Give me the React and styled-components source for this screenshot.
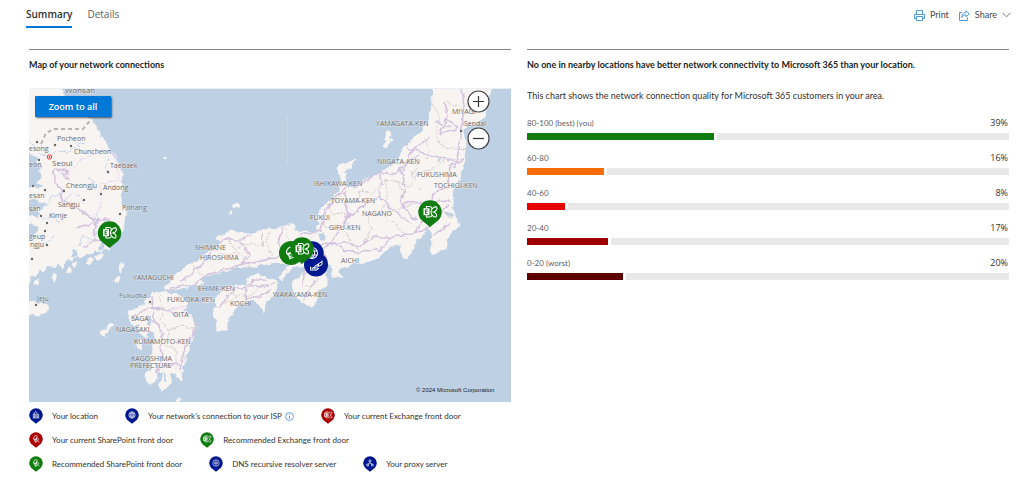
import React from "react";
import styled, { createGlobalStyle } from "styled-components";

const GlobalStyle = createGlobalStyle`
  * { box-sizing: border-box; }
  body {
    margin: 0;
    background: #fff;
    color: #323130;
    font-family: Lato, "Open Sans", sans-serif;
    font-size: 9px;
    line-height: 16px;
  }
  button { font-family: inherit; }
`;

const TopBar = styled.header`
  display: flex;
  justify-content: space-between;
  align-items: flex-start;
  padding: 0 13px 0 26px;
`;

const Tabs = styled.nav`
  display: flex;
  gap: 15px;
`;

const Tab = styled.button`
  border: 0;
  border-bottom: 2px solid ${(p) => (p.$active ? "#0078d4" : "transparent")};
  background: none;
  padding: 6px 0 4px;
  font-family: "Open Sans", sans-serif;
  font-size: 10px;
  line-height: 16px;
  font-weight: ${(p) => (p.$active ? 600 : 400)};
  color: ${(p) => (p.$active ? "#323130" : "#605e5c")};
`;

const Actions = styled.div`
  display: flex;
  gap: 10px;
  padding-top: 7px;
`;

const Action = styled.button`
  display: flex;
  align-items: center;
  gap: 5px;
  border: 0;
  background: none;
  padding: 0;
  font-size: 9px;
  line-height: 16px;
  color: #484644;
`;

const Columns = styled.main`
  display: grid;
  grid-template-columns: 1fr 1fr;
  gap: 16px;
  padding: 21px 15px 16px 29px;
`;

const Panel = styled.section`
  min-width: 0;
  border-top: 1px solid #7d8794;
  padding-top: 7px;
`;

const Heading = styled.h2`
  margin: 0 0 15px;
  font-size: 9px;
  line-height: 16px;
  font-weight: 700;
  color: #201f1e;
`;

const MapFrame = styled.div`
  position: relative;
  border-top: 1px solid #e9eff6;
  svg { display: block; }
`;

const ZoomAll = styled.button`
  position: absolute;
  top: 7px;
  left: 6px;
  width: 76px;
  height: 21px;
  border: 0;
  border-radius: 1px;
  padding: 0;
  background: #0078d7;
  color: #fff;
  font-family: "Open Sans", sans-serif;
  font-size: 9px;
  font-weight: 600;
  box-shadow: 1px 1px 2px rgba(0, 0, 0, 0.6);
`;

const ZoomButtons = styled.div`
  position: absolute;
  top: 1px;
  right: 21px;
  display: grid;
  gap: 14px;
`;

const RoundButton = styled.button`
  width: 23px;
  height: 23px;
  border: 0;
  padding: 0;
  background: none;
`;

const Legend = styled.ul`
  display: flex;
  flex-wrap: wrap;
  gap: 8px 27px;
  list-style: none;
  margin: 6px 0 0;
  padding: 0;
`;

const LegendItem = styled.li`
  display: flex;
  align-items: center;
  gap: 9px;
  font-size: 8px;
  line-height: 16px;
`;

const LegendText = styled.span`
  display: flex;
  align-items: center;
  gap: 3px;
`;

const Intro = styled.p`
  margin: 0 0 11px;
`;

const Bars = styled.dl`
  display: grid;
  gap: 10px;
  margin: 0;
`;

const BarRow = styled.div`
  display: grid;
  grid-template-columns: 1fr auto;
  row-gap: 2px;
`;

const BarLabel = styled.dt`
  font-size: 8px;
  color: #605e5c;
`;

const BarValue = styled.dd`
  margin: 0;
  padding-right: 1px;
  font-family: "Open Sans", sans-serif;
  font-size: 9px;
`;

const Meter = styled.dd`
  grid-column: 1 / -1;
  display: flex;
  gap: 3px;
  height: 7px;
  margin: 0;
`;

const Fill = styled.span`
  flex: ${(p) => p.$share} 0 0;
  background: ${(p) => p.$color};
`;

const bars = [
  { label: "80-100 (best) (you)", value: 39, color: "#107c10" },
  { label: "60-80", value: 16, color: "#f76c00" },
  { label: "40-60", value: 8, color: "#e60000" },
  { label: "20-40", value: 17, color: "#9e0000" },
  { label: "0-20 (worst)", value: 20, color: "#5e0000" },
];

const NAVY = "#00188f";
const GREEN = "#107c10";
const RED = "#a80000";

const glyphs = {
  exchange: (
    <>
      <path d="M1 -0.500 C1 -3 4 -5.500 6.500 -5 C8 -3 6 -0.500 3.500 0 C6 0.800 7.500 3 6 5 C3.500 5.500 1.500 3 1 0.500Z M-3.500 -3.500 V-5.500 H0 Q2 -5 2 -3 M-3.500 3 V5 H0 Q2 4.500 2 3" fill="none" strokeWidth="1.100" />
      <path d="M-6.500 -3.800 H-0.500 V3.200 H-6.500Z" fill="#fff" stroke="none" />
      <path d="M-2.300 -2.200 H-4.500 V1.700 H-2.300 M-4.500 -0.300 H-2.600" fill="none" stroke="var(--pin)" strokeWidth="0.900" />
    </>
  ),
  sharepoint: (
    <>
      <path d="M1.500 -5.500 A4.500 4.500 0 0 0 -3 2 M0 -1.500 A3 3 0 0 1 4.500 1.500 M3 3 L6 5 M1.500 -5.500 Q3.500 -4 1 -2.500" fill="none" strokeWidth="1.200" />
      <path d="M-3.500 0 L1.500 -1.500 3 4.500 -1.500 6.500Z" fill="#fff" stroke="none" />
      <path d="M0.800 0.800 L-1.200 1.500 -0.800 2.800 1.200 2.600 1.500 4 -0.500 4.500" fill="none" stroke="var(--pin)" strokeWidth="0.900" />
    </>
  ),
  globe: (
    <>
      <circle r="5.500" fill="none" strokeWidth="1.100" />
      <path d="M0 -5.500 V5.500 M-5 -2 H5 M-5 2 H5 M0 -5.500 C-3.500 -2 -3.500 2 0 5.500 C3.500 2 3.500 -2 0 -5.500" fill="none" strokeWidth="1" />
    </>
  ),
  building: (
    <path d="M-5.500 5 H5.500 M-4.500 5 V-2 L-2.500 -3.500 V5 M-2.500 -4 L0 -6 1.500 -4 V5 M1.500 -1 H4.500 V5 M-0.500 -2 V4 M3 1 V4" fill="none" strokeWidth="1.100" />
  ),
  office: (
    <path d="M-6 5.500 H1 L3 3.500 M-6 1 H0 L6 -3 M-6 3.200 H0 M-5.500 1 V5 M-3.300 1 V5 M-1.100 1 V5 M1.100 0.500 V5 M2.500 -0.500 V2 L6 0 V-4" fill="none" strokeWidth="1" />
  ),
  dns: (
    <>
      <circle r="5.500" fill="none" strokeWidth="1" />
      <path d="M-3.500 -1 H3.500 M-3.500 1 H3.500 M-2 -3.500 H2 M-2 3.500 H2" fill="none" strokeWidth="1" />
    </>
  ),
  proxy: (
    <path d="M-1.500 -5 H1.500 V-2 H-1.500Z M0 -2 V0 M0 0 L-4 2 M0 0 L4 2 M-5.500 2 H-2.500 V5 H-5.500Z M2.500 2 H5.500 V5 H2.500Z" fill="none" strokeWidth="1.100" />
  ),
};

function Pin({ color, glyph, x = 0, y = 0, round }) {
  return (
    <g transform={`translate(${x} ${y})`} style={{ "--pin": color }} stroke="#fff">
      {round ? (
        <circle r="12" fill={color} stroke="none" />
      ) : (
        <path d="M0 15 L-8.600 8 A11.700 11.700 0 1 1 8.600 8Z" fill={color} stroke="none" />
      )}
      {glyphs[glyph]}
    </g>
  );
}

const legend = [
  { text: "Your location", color: NAVY, glyph: "building" },
  { text: "Your network's connection to your ISP", color: NAVY, glyph: "globe", info: true },
  { text: "Your current Exchange front door", color: RED, glyph: "exchange" },
  { text: "Your current SharePoint front door", color: RED, glyph: "sharepoint" },
  { text: "Recommended Exchange front door", color: GREEN, glyph: "exchange" },
  { text: "Recommended SharePoint front door", color: GREEN, glyph: "sharepoint" },
  { text: "DNS recursive resolver server", color: NAVY, glyph: "dns" },
  { text: "Your proxy server", color: NAVY, glyph: "proxy" },
];

const MapSvg = styled.svg`
  width: 100%;
  height: auto;
  background: #bdd0e4;
`;

const PlaceName = styled.text`
  font-family: "Open Sans", "Noto Sans", sans-serif;
  font-size: ${(p) => (p.$large ? 8 : 7)}px;
  fill: #6c6a6a;
  stroke: #f8f6f4;
  stroke-width: 1px;
  stroke-opacity: 0.6;
  paint-order: stroke;
`;

const Copyright = styled.text`
  font-family: "Liberation Sans", sans-serif;
  font-size: 6px;
  fill: #222;
`;

const land = [
  "M20 80 H61 L63 95 70 103 80 112 89 116 94 123 100 135 108 146 115 160 121 171 122 185 121 198 123 208 127 213 125 221 122 231 118 240 113 244 110 249 104 248 101 252 96 250 92 255 87 253 82 258 76 255 72 261 67 258 63 267 58 263 54 269 48 265 44 272 40 270 35 277 32 275 29 282 20 282Z",
  "M433 80 L432 105 429 120 422 131 413 138 405 148 400 156 392 166 383 171 375 176 368 178 362 181 358 187 352 190 346 188 344 183 347 176 343 173 353 166 356 159 348 162 339 165 338 171 340 178 341 188 335 195 328 203 322 209 318 217 320 223 317 230 312 233 305 231 299 233 295 231 295 225 288 225 280 228 270 229 260 232 247 233 238 234 232 231 223 234 218 238 220 242 215 247 205 255 197 262 187 265 180 272 170 280 165 287 171 290 180 288 187 289 193 285 203 284 200 278 210 275 220 272 228 271 233 267 247 268 260 265 277 262 285 264 293 268 302 265 306 270 300 278 293 280 292 288 295 295 302 302 312 306 317 300 318 292 327 285 327 277 323 268 328 263 333 268 331 277 345 277 337 272 343 268 353 263 365 263 380 257 388 250 396 244 401 246 401 256 408 259 413 252 413 244 422 238 427 228 432 231 433 243 430 251 433 255 445 248 448 237 460 225 455 218 452 208 452 195 460 178 465 161 465 145 463 131 468 124 476 126 484 118 488 108 492 80Z",
  "M248 278 L258 274 266 278 275 280 277 287 272 297 267 302 263 312 258 303 248 300 240 305 232 313 227 323 227 330 218 330 217 320 212 315 218 305 212 300 205 302 219 295 223 290 233 285 247 286Z",
  "M153 292 L160 293 166 290 170 295 180 296 188 300 186 308 180 311 191 314 195 327 191 343 185 357 183 373 180 380 176 374 171 373 170 383 166 387 161 392 160 383 164 374 157 370 156 383 148 383 146 375 153 368 150 358 153 347 156 340 153 332 149 330 145 337 140 333 136 330 140 321 134 325 129 318 128 311 138 308 145 304 149 297Z",
  "M20 304 L41 303 48 307 46 312 38 315 20 314Z",
  "M389 129 L392 133 389 138 392 141 386 148 383 146 387 141 384 140Z",
  "M289 266 L291 268 284 277 281 281 280 277Z",
  "M120 263 L123 265 121 272 119 272Z M117 275 L119 277 117 283 114 282Z",
  "M112 322 L113 325 106 333 104 337 100 333 106 330Z",
  "M138 340 L143 343 141 350 136 347Z",
  "M234 203 L237 202.500 239 205 237 208 234 207Z M229 211 H231 V213 H229Z M163 158 H166 V160 H163Z",
  "M51 277 L54 273 56 278 54 283Z M66 270 L70 267 72 272 68 273Z M85 262 L91 258 93 261 88 264Z M95 256 L101 254 101 259 97 260Z M36 280 L39 279 38 285 35 284Z M73 263 L77 262 76 267Z",
  "M177 399 H180 V402 H177Z",
];

const inlets = [
  "M20 150 L34 156 39 158 36 163 43 167 38 172 42 178 36 182 43 186 38 190 34 187 20 191Z",
  "M20 200 L36 199 40 204 46 203 43 208 37 209 42 215 38 219 33 215 20 218Z",
  "M20 228 L33 224 38 226 36 232 32 236 20 237Z",
  "M98 250 L102 241 104 243 102 251Z M71 257 L73 249 76 250 75 257Z",
  "M318 233 L323 232 325 238 322 243Z",
  "M445 211 L450 213 453 217 447 215Z M437 158 L440 159 439 163 437 162Z",
  "M148 315 L152 318 150 326 146 324Z M164 372 L167 376 164 382Z",
];

const rivers =
  "M29 141 L42 155 50 158 58 150 68 152 78 146 82 153 M72 139 L78 145 85 143 M45 206 L52 196 60 193 M64 201 L72 192 84 202 M88 176 L96 190 101 196 M110 158 L104 168 110 174 M31 249 L44 244 56 236 M78 246 L84 236 92 240 M42 220 L52 215 58 222 M98 214 L94 226 97 235 M412 171 L414 178 M420 188 L421 190";

const roads =
  "M53 169 L67 171 68 174 62 173 69 181 M53 169 L54 180 62 192 62 201 76 208 92 218 95 226 94 240 M76 228 L88 225 96 220 110 220 M84 246 L94 240 104 241 M60 194 L63 204 M95 226 L100 218 M152 295 L153 307 165 310 178 314 M153 307 L140 312 132 320 M153 307 L154 320 163 333 161 345 162 355 156 372 M195 320 L194 333 184 350 181 370 M162 365 L182 364 M168 291 L178 286 192 286 205 276 222 270 M180 281 L190 275 205 262 214 248 226 238 236 240 252 235 M222 270 L242 264 262 261 280 256 300 252 M238 240 L250 255 242 264 M262 233 L263 246 M282 228 L278 243 285 252 M247 287 L246 300 M219 307 L234 289 248 287 275 284 M248 286 L252 280 266 280 M246 298 L262 296 270 290 M300 235 L320 230 325 212 334 199 345 188 360 184 380 172 395 175 403 166 418 155 M335 198 L347 193 M346 190 L345 205 350 215 341 228 331 243 322 250 M331 243 L347 243 358 248 373 236 390 238 414 232 428 214 M300 252 L314 246 331 243 350 252 380 250 390 240 M305 265 L303 285 M322 250 L326 260 316 276 M314 280 L303 299 M380 172 L383 185 378 196 363 207 345 218 M378 196 L393 210 412 224 M400 167 L405 190 400 202 415 220 M404 170 L412 150 430 138 M407 148 L430 155 460 162 M454 170 L460 145 462 128 464 106 462 89 M443 100 L448 120 458 128 440 134 446 118 M435 122 L450 127 M403 203 L450 201 M428 214 L432 195 448 185 450 165 464 160 M414 232 L424 231 435 220 448 205 M433 235 L452 223";

const softRoads =
  "M67 171 L82 160 102 150 115 154 119 180 99 184 104 198 97 212 92 220 M48 156 L67 171 M166 310 L188 306";

const borders =
  "M158 293 L164 310 160 320 168 330 180 326 194 328 M168 330 L166 345 176 350 176 370 M215 250 L225 255 238 252 248 260 250 270 M192 262 L198 272 205 275 M228 240 L235 250 246 244 256 246 266 242 270 233 M266 242 L272 255 M285 228 L290 245 300 248 M318 230 L312 238 305 242 308 256 M327 204 L332 215 345 212 348 224 332 229 322 224 M340 180 L334 194 M345 206 L358 198 360 190 M360 190 L372 195 385 180 398 183 M385 180 L388 196 382 212 395 225 M345 230 L352 244 M366 215 L372 228 365 240 358 250 M395 225 L410 240 M395 210 L420 202 438 206 452 218 M398 183 L410 186 418 175 440 165 445 158 M418 155 L414 175 M432 105 L440 118 436 135 445 148 465 150 M424 138 L430 150 426 160 M445 100 L462 108 M400 204 L403 190 394 180 M232 290 L240 300 M222 305 L236 297 250 295 262 285 M310 270 L320 275 314 285 300 287";

const labels = [
  ["Wonsan", 65, 93, true],
  ["Pocheon", 57, 141],
  ["esong", 29, 151],
  ["Chuncheon", 74, 154],
  ["Seoul", 52, 166, true],
  ["Taebaek", 110, 168],
  ["eon", 29, 167],
  ["Cheongju", 66, 188],
  ["Andong", 103, 190],
  ["esan", 29, 198],
  ["Sangju", 58, 207],
  ["san", 29, 211],
  ["Pohang", 122, 210],
  ["Kimje", 49, 218],
  ["geup", 29, 239],
  ["ngju", 30, 247],
  ["Jeju", 37, 301],
  ["Fukuoka", 119, 298],
  ["YAMAGUCHI", 133, 280],
  ["FUKUOKA-KEN", 167, 302],
  ["SAGA", 131, 321],
  ["OITA", 173, 317],
  ["NAGASAKI", 116, 332],
  ["KUMAMOTO-KEN", 134, 344],
  ["KAGOSHIMA", 131, 361],
  ["PREFECTURE", 130, 368],
  ["SHIMANE", 195, 250],
  ["HIROSHIMA", 200, 260],
  ["EHIME-KEN", 198, 291],
  ["KOCHI", 230, 306],
  ["WAKAYAMA-KEN", 273, 297],
  ["AICHI", 341, 263],
  ["GIFU-KEN", 329, 230],
  ["FUKUI", 310, 220],
  ["NAGANO", 362, 216],
  ["TOYAMA-KEN", 331, 203],
  ["ISHIKAWA-KEN", 314, 186],
  ["TOCHIGI-KEN", 434, 188],
  ["FUKUSHIMA", 417, 177],
  ["NIIGATA-KEN", 377, 164],
  ["YAMAGATA-KEN", 376, 126],
  ["Sendai", 464, 126],
  ["MIYAGI", 452, 114],
];

const towns = [
  [37, 142], [55, 145], [71, 146], [39, 160], [108, 172], [64, 191], [45, 190], [101, 194], [33, 186],
  [84, 200], [120, 214], [41, 216], [47, 223], [45, 231], [47, 245], [32, 259], [36, 305], [150, 302], [461, 131],
];

function ConnectionMap() {
  return (
    <MapSvg viewBox="29 89 482 313" role="img" aria-label="Map of your network connections">
      <filter id="coast" x="0" y="0" width="1" height="1">
        <feTurbulence type="fractalNoise" baseFrequency="0.14" numOctaves="3" seed="4" />
        <feDisplacementMap in="SourceGraphic" scale="6" xChannelSelector="R" yChannelSelector="G" />
      </filter>
      <g filter="url(#coast)">
        {land.map((d) => (
          <path key={d} d={d} fill="#f7f4f2" stroke="#f7f4f2" strokeWidth="1" strokeLinejoin="round" />
        ))}
        {inlets.map((d) => (
          <path key={d} d={d} fill="#bdd0e4" />
        ))}
        <path d={rivers} fill="none" stroke="#c5d6e8" strokeWidth="1" />
        <path d={borders} fill="none" stroke="#d3cccb" strokeWidth="1" strokeDasharray="2 1" />
        <path d={softRoads} fill="none" stroke="#eed9f2" strokeWidth="1" />
        <path d={roads} fill="none" stroke="#d4c2de" strokeWidth="1.500" strokeLinejoin="round" />
      </g>
      <path d="M41 144 L46 133 54 129 83 129 89 122 90 116" fill="none" stroke="#b9b5b4" strokeWidth="2" strokeDasharray="4 3" />
      <path d="M287 115 V165" stroke="#cbd8e6" strokeWidth="1" />
      {towns.map(([x, y]) => (
        <circle key={`${x}-${y}`} cx={x} cy={y} r="1.200" fill="#666" />
      ))}
      <circle cx="49.500" cy="157" r="2.200" fill="#fff" stroke="#e0403a" strokeWidth="1" />
      <circle cx="49.500" cy="157" r="1" fill="#e0403a" />
      {labels.map(([name, x, y, large]) => (
        <PlaceName key={name} x={x} y={y} $large={large}>
          {name}
        </PlaceName>
      ))}
      <Pin x={109.5} y={233} color={GREEN} glyph="exchange" />
      <Pin x={430} y={212} color={GREEN} glyph="exchange" />
      <Pin x={316} y={264.5} color={NAVY} glyph="office" round />
      <Pin x={312} y={253} color={NAVY} glyph="globe" />
      <Pin x={291} y={253} color={GREEN} glyph="sharepoint" round />
      <Pin x={302} y={249} color={GREEN} glyph="exchange" />
      <Copyright x="416" y="392">© 2024 Microsoft Corporation</Copyright>
    </MapSvg>
  );
}

function RoundIcon({ plus }) {
  return (
    <svg width="23" height="23" viewBox="0 0 23 23">
      <circle cx="11.500" cy="11.500" r="10.500" fill="#fff" stroke="#444" strokeWidth="1.200" />
      <path d={plus ? "M6 11.500 H17 M11.500 6 V17" : "M6 11.500 H17"} stroke="#333" strokeWidth="1.200" />
    </svg>
  );
}

export default function App() {
  return (
    <>
      <GlobalStyle />
      <TopBar>
        <Tabs>
          <Tab $active>Summary</Tab>
          <Tab>Details</Tab>
        </Tabs>
        <Actions>
          <Action>
            <svg width="11" height="11" viewBox="0 0 11 11" fill="none" stroke="#4a9be0">
              <path d="M2.500 4.500 V0.500 H8.500 V4.500 M2.500 8.500 H0.500 V4.500 H10.500 V8.500 H8.500 M2.500 6.500 H8.500 V10.500 H2.500Z" />
            </svg>
            Print
          </Action>
          <Action>
            <svg width="11" height="11" viewBox="0 0 11 11" fill="none" stroke="#4a9be0">
              <path d="M3 2.500 H0.500 V10.500 H8.500 V7.500 M7 0.800 L10.300 3.800 7 6.800 V5 C5 5 4 5.500 2.700 7.500 C3 4.500 4.500 2.700 7 2.500Z" strokeLinejoin="round" />
            </svg>
            Share
            <svg width="9" height="6" viewBox="0 0 9 6" fill="none" stroke="#777">
              <path d="M0.500 0.800 L4.500 4.800 L8.500 0.800" />
            </svg>
          </Action>
        </Actions>
      </TopBar>
      <Columns>
        <Panel>
          <Heading>Map of your network connections</Heading>
          <MapFrame>
            <ConnectionMap />
            <ZoomAll>Zoom to all</ZoomAll>
            <ZoomButtons>
              <RoundButton aria-label="Zoom in"><RoundIcon plus /></RoundButton>
              <RoundButton aria-label="Zoom out"><RoundIcon /></RoundButton>
            </ZoomButtons>
          </MapFrame>
          <Legend>
            {legend.map((item) => (
              <LegendItem key={item.text}>
                <svg width="14" height="16" viewBox="-12 -12 24 27.500" aria-hidden="true">
                  <Pin color={item.color} glyph={item.glyph} />
                </svg>
                <LegendText>
                  {item.text}
                  {item.info && (
                    <svg width="9" height="9" viewBox="0 0 9 9" fill="none" stroke="#4a90d0">
                      <circle cx="4.500" cy="4.500" r="4" strokeWidth="0.800" />
                      <path d="M4.500 4 V7 M4.500 2 V3" strokeWidth="0.900" />
                    </svg>
                  )}
                </LegendText>
              </LegendItem>
            ))}
          </Legend>
        </Panel>
        <Panel>
          <Heading>
            No one in nearby locations have better network connectivity to Microsoft 365 than your location.
          </Heading>
          <Intro>This chart shows the network connection quality for Microsoft 365 customers in your area.</Intro>
          <Bars>
            {bars.map((bar) => (
              <BarRow key={bar.label}>
                <BarLabel>{bar.label}</BarLabel>
                <BarValue>{bar.value}%</BarValue>
                <Meter aria-hidden="true">
                  <Fill $share={bar.value} $color={bar.color} />
                  <Fill $share={100 - bar.value} $color="#e8e8e8" />
                </Meter>
              </BarRow>
            ))}
          </Bars>
        </Panel>
      </Columns>
    </>
  );
}
